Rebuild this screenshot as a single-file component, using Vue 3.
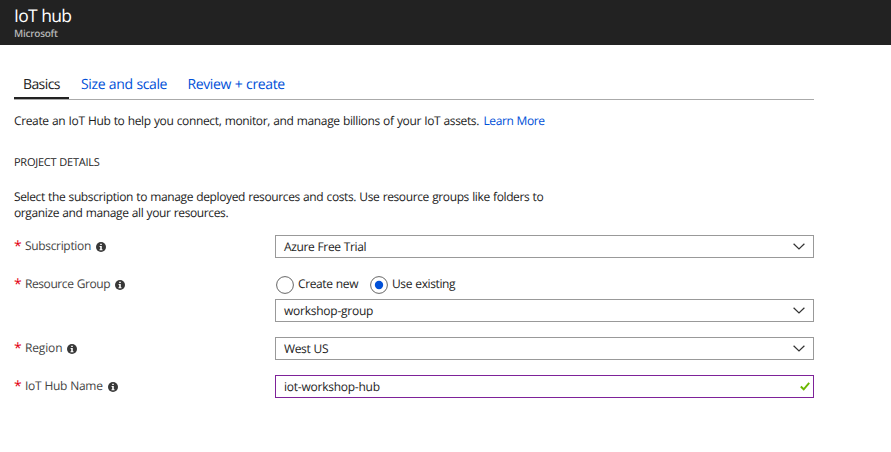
<script setup>
import { ref } from 'vue'

const tabs = [
  { label: 'Basics', cls: 'basics' },
  { label: 'Size and scale', cls: 'size' },
  { label: 'Review + create', cls: 'review' },
]
const active = ref('Basics')
const group = ref('Use existing')
const fields = [
  { label: 'Subscription', value: 'Azure Free Trial', cls: 'sub' },
  { label: 'Resource Group', value: 'workshop-group', cls: 'grp', radios: ['Create new', 'Use existing'] },
  { label: 'Region', value: 'West US', cls: 'reg' },
  { label: 'IoT Hub Name', value: 'iot-workshop-hub', cls: 'name', input: true },
]
</script>

<template>
  <div class="page">
    <header class="header">
      <h1>IoT hub</h1>
      <div class="publisher">Microsoft</div>
    </header>
    <main class="content">
      <nav class="tabs">
        <a v-for="t in tabs" :key="t.label" class="tab" :class="[t.cls, { active: active === t.label }]" @click="active = t.label"><span>{{ t.label }}</span></a>
      </nav>
      <p class="intro"><span>Create an IoT Hub to help you connect, monitor, and manage billions of your IoT assets.</span><a class="learn">Learn More</a></p>
      <h2><span>PROJECT DETAILS</span></h2>
      <p class="details"><span class="line1">Select the subscription to manage deployed resources and costs. Use resource groups like folders to</span><br><span class="line2">organize and manage all your resources.</span></p>
      <div class="form">
        <div v-for="f in fields" :key="f.label" class="field" :class="f.cls">
          <div class="label">
            <span class="star">*</span><span class="caption">{{ f.label }}</span>
            <svg class="info" width="10" height="10" viewBox="0 0 10 10">
              <circle cx="5" cy="5" r="5" fill="#383838" />
              <path d="M4.2 1.7h1.6v1.4H4.2zM3.6 4h2.2v3.3h.7v.9h-3v-.9h.7V4.9h-.6z" fill="#fff" />
            </svg>
          </div>
          <div class="control">
            <div v-if="f.radios" class="radios">
              <label v-for="r in f.radios" :key="r" class="radio" @click="group = r">
                <svg width="18" height="18" viewBox="0 0 18 18">
                  <circle cx="9" cy="9" r="8.4" fill="#fff" stroke="#666" stroke-width="1" />
                  <circle v-if="group === r" cx="9" cy="9" r="4.2" fill="#0050d8" />
                </svg>
                <span>{{ r }}</span>
              </label>
            </div>
            <div class="box" :class="{ focused: f.input }">
              <span>{{ f.value }}</span>
              <svg v-if="f.input" class="check" width="10" height="9" viewBox="0 0 10 9">
                <path d="M.8 4.5 3.7 7.3 9.2.8" fill="none" stroke="#6bb700" stroke-width="1.9" />
              </svg>
              <svg v-else class="chevron" width="12" height="7" viewBox="0 0 12 7">
                <path d="M.6.7 6 6 11.4.7" fill="none" stroke="#333" stroke-width="1.2" />
              </svg>
            </div>
          </div>
        </div>
      </div>
    </main>
  </div>
</template>

<style>
body { margin: 0; background: #fff; }
</style>

<style scoped>
.page { width: 891px; height: 452px; overflow: hidden; box-sizing: border-box; font-family: "Open Sans", "Noto Sans", sans-serif; font-size: 12px; color: #1c1c1c; letter-spacing: -.38px; word-spacing: .5px; text-rendering: geometricPrecision; }
h1, h2, p { margin: 0; font-weight: 400; }
.header { height: 45px; box-sizing: border-box; padding: 5px 14px 0; background: #222; color: #fff; }
h1 { font-size: 17.5px; line-height: 22px; letter-spacing: -.7px; }
.publisher { font-size: 10px; line-height: 13px; font-weight: 600; letter-spacing: -.25px; color: #b5b5b5; }
.content { width: 800px; padding: 27px 0 0 14px; }
.tabs { display: flex; height: 27px; border-bottom: 1px solid #aaa; }
.tab { box-sizing: border-box; height: 27px; font-size: 14px; line-height: 26px; color: #0050d8; white-space: nowrap; padding-left: 9px; cursor: pointer; }
.tab.basics { width: 55px; margin-right: 3px; letter-spacing: -.6px; }
.tab.size { width: 106.5px; }
.tab.active { color: #222; border-bottom: 2px solid #222; }
.intro { display: flex; height: 16px; margin-top: 13px; line-height: 16px; white-space: nowrap; letter-spacing: -.36px; }
.intro > span { width: 469.5px; }
.learn { color: #0050d8; letter-spacing: -.42px; }
h2 { margin-top: 26px; font-size: 11px; line-height: 16px; letter-spacing: -.25px; }
.details { margin-top: 18px; line-height: 16px; white-space: nowrap; }
.form { padding-top: 14px; }
.field { display: flex; margin-bottom: 15px; }
.label { display: flex; width: 261px; height: 23px; line-height: 22px; color: #444; letter-spacing: -.33px; }
.grp .label { letter-spacing: -.42px; }
.reg .label { letter-spacing: -.15px; }
.star { width: 11px; color: #e3000f; font-size: 14px; line-height: 24px; }
.info { margin: 7px 0 0 5px; }
.control { width: 539px; }
.radios { display: flex; height: 26px; }
.radio { display: flex; width: 94px; line-height: 22px; white-space: nowrap; }
.radio svg { margin: 3px 4px 0 1px; flex: none; }
.box { display: flex; justify-content: space-between; align-items: center; box-sizing: border-box; height: 23px; padding: 0 8px; border: 1px solid #999; line-height: 21px; }
.grp .box, .name .box { letter-spacing: -.24px; }
.box.focused { border-color: #7e2299; padding-right: 3px; }
</style>
